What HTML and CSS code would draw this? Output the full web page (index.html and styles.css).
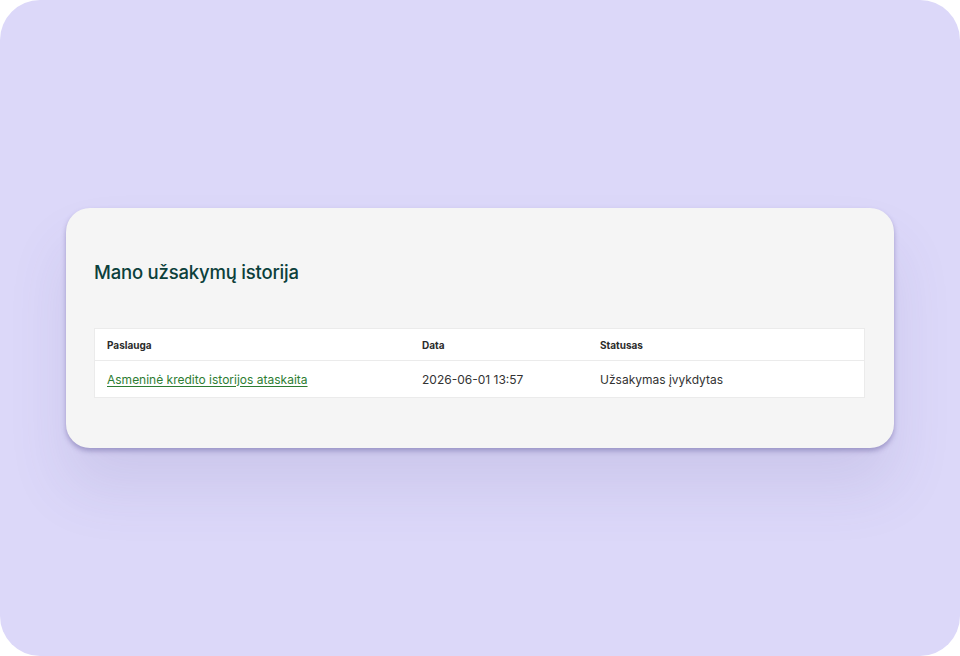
FILE: index.html
```html
<!DOCTYPE html>
<html lang="lt">
<head>
<meta charset="utf-8">
<link rel="stylesheet" href="styles.css">
</head>
<body>
<div class="frame">
  <section class="card">
    <h2 class="title">Mano užsakymų istorija</h2>
    <table class="orders">
      <thead>
        <tr>
          <th class="c1">Paslauga</th>
          <th class="c2">Data</th>
          <th class="c3">Statusas</th>
        </tr>
      </thead>
      <tbody>
        <tr>
          <td><a href="#" class="link">Asmeninė kredito istorijos ataskaita</a></td>
          <td>2026-06-01 13:57</td>
          <td>Užsakymas įvykdytas</td>
        </tr>
      </tbody>
    </table>
  </section>
</div>
</body>
</html>
```
FILE: styles.css
```css
html, body {
  margin: 0;
  padding: 0;
  background: #ffffff;
}
body {
  font-family: Inter, "Noto Sans", sans-serif;
}
.frame {
  width: 960px;
  height: 656px;
  border-radius: 40px;
  background: #dcd8f9;
  display: flex;
  align-items: center;
  justify-content: center;
}
.card {
  box-sizing: border-box;
  width: 828px;
  height: 240px;
  background: #f5f5f5;
  border-radius: 24px;
  padding: 52px 28px 0 28px;
  box-shadow: 0 3px 5px rgba(80, 70, 140, 0.4), 0 40px 60px rgba(90, 80, 150, 0.12);
}
.title {
  margin: 0;
  font-size: 18.5px;
  line-height: 24px;
  font-weight: 500;
  color: #0c403b;
  letter-spacing: -0.2px;
}
.orders {
  margin-top: 44px;
  width: 771px;
  border-collapse: collapse;
  background: #ffffff;
  border: 1px solid #ebebeb;
}
.orders th {
  text-align: left;
  font-size: 10px;
  font-weight: 700;
  color: #2b2b2b;
  height: 31px;
  padding: 0 12px;
  border-bottom: 1px solid #ebebeb;
}
.orders td {
  font-size: 12px;
  color: #333333;
  height: 36px;
  padding: 0 12px;
}
.c1 { width: 291px; }
.c2 { width: 154px; }
.link {
  color: #2e7d32;
  text-decoration: underline;
  text-underline-offset: 2px;
}
```
